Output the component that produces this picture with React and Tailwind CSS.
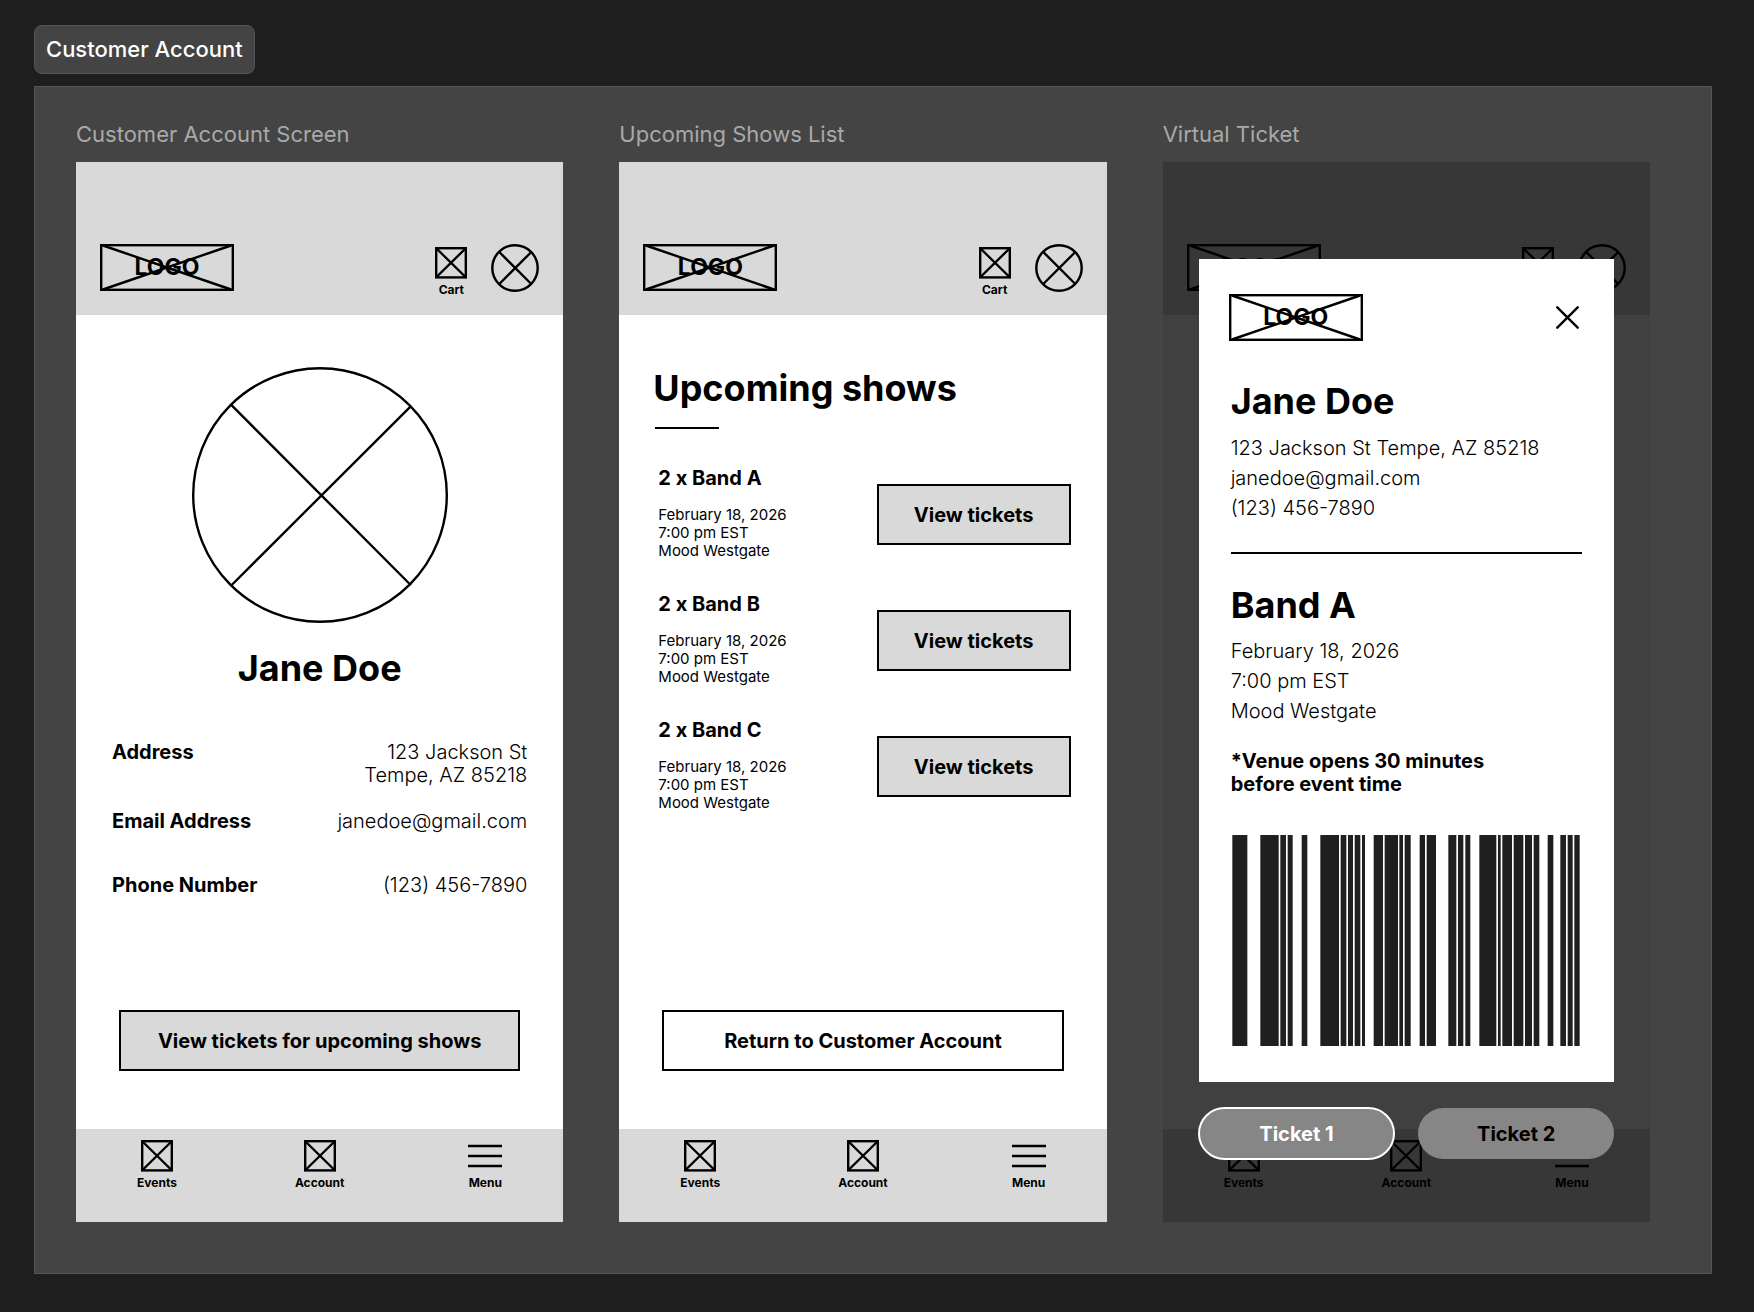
const shows = [
  { id: "a", band: "Band A" },
  { id: "b", band: "Band B" },
  { id: "c", band: "Band C" },
];

// [start, width] of each bar
const bars = [
  [1, 45], [85, 55], [145, 17], [167, 15], [209, 17], [265, 56], [326, 17], [348, 15], [368, 17], [390, 9],
  [425, 28], [458, 40], [502, 11], [518, 18], [563, 16], [584, 28], [649, 24], [678, 16], [700, 15], [742, 51],
  [798, 8], [811, 29], [845, 29], [879, 21], [905, 17], [947, 17], [985, 17], [1007, 15], [1027, 16],
];

function Logo() {
  return (
    <div className="relative flex h-[47px] w-[134px] items-center justify-center">
      <span className="text-[23px] font-bold">LOGO</span>
      <svg className="absolute inset-0" width="134" height="47" fill="none" stroke="black" strokeWidth="2.4" aria-hidden="true">
        <rect x="1.2" y="1.2" width="131.6" height="44.6" />
        <path d="M3 1.5 131 45.5M131 1.5 3 45.5" />
      </svg>
    </div>
  );
}

function BoxIcon() {
  return (
    <svg className="shrink-0" width="32" height="32" fill="none" stroke="black" strokeWidth="2.4" aria-hidden="true">
      <rect x="1.2" y="1.2" width="29.6" height="29.2" />
      <path d="M1.5 1.5 30.5 30M30.5 1.5 1.5 30" />
    </svg>
  );
}

function ScreenHeader() {
  return (
    <header className="flex h-[153px] items-start justify-between bg-[#d9d9d9] px-6 pt-[82px]">
      <Logo />
      <div className="flex items-start gap-6">
        <button type="button" className="flex flex-col items-center gap-[3px] pt-[3px] text-xs leading-4 font-bold">
          <BoxIcon />
          Cart
        </button>
        <button type="button" aria-label="Profile">
          <svg className="block" width="48" height="48" fill="none" stroke="black" strokeWidth="2.4" aria-hidden="true">
            <circle cx="24" cy="24" r="22.7" />
            <path d="M8.3 8 40.3 40M40.3 8 8.3 40" />
          </svg>
        </button>
      </div>
    </header>
  );
}

function ScreenNav() {
  return (
    <nav className="grid h-[93px] grid-cols-3 items-start bg-[#d9d9d9] px-[61px] pt-[11px] text-xs leading-4 font-bold">
      <a href="#events" className="flex flex-col items-center gap-[3px] justify-self-start">
        <BoxIcon />
        Events
      </a>
      <a href="#account" className="flex flex-col items-center gap-[3px] justify-self-center">
        <BoxIcon />
        Account
      </a>
      <a href="#menu" className="flex flex-col items-center gap-[3px] justify-self-end">
        <svg width="34" height="32" stroke="black" strokeWidth="2.4" aria-hidden="true">
          <path d="M0 6h34M0 16h34M0 26h34" />
        </svg>
        Menu
      </a>
    </nav>
  );
}

function Screen({ title, children }) {
  return (
    <section className="flex flex-col">
      <h2 className="mb-3 text-[22px] leading-8 text-[#a9a9a9]">{title}</h2>
      <div className="relative flex grow flex-col bg-white">
        <ScreenHeader />
        {children}
        <ScreenNav />
      </div>
    </section>
  );
}

function Detail({ label, children }) {
  return (
    <div className="flex min-h-[41px] justify-between">
      <dt className="font-bold">{label}</dt>
      <dd className="text-right font-light">{children}</dd>
    </div>
  );
}

function AccountScreen() {
  return (
    <Screen title="Customer Account Screen">
      <main className="flex grow flex-col px-9 pt-[52px] pb-[58px]">
        <svg className="self-center" width="256" height="256" fill="none" stroke="black" strokeWidth="2.4" aria-hidden="true">
          <circle cx="128" cy="128" r="126.8" />
          <path d="M38.7 37.3 218.7 218M218.7 39.3 38.7 219" />
        </svg>
        <h1 className="mt-[23px] text-center text-4xl leading-11 font-bold">Jane Doe</h1>
        <dl className="mt-[51px] mb-[95px] flex flex-col gap-[23px] text-xl leading-[23px]">
          <Detail label="Address">
            123 Jackson St
            <br />
            Tempe, AZ 85218
          </Detail>
          <Detail label="Email Address">janedoe@gmail.com</Detail>
          <Detail label="Phone Number">(123) 456-7890</Detail>
        </dl>
        <button type="button" className="mx-[7px] mt-auto h-[61px] border-2 border-black bg-[#d9d9d9] text-xl font-bold">
          View tickets for upcoming shows
        </button>
      </main>
    </Screen>
  );
}

function ShowsScreen() {
  return (
    <Screen title="Upcoming Shows List">
      <main className="flex grow flex-col px-9 pt-[51px] pb-[58px]">
        <h1 className="-ml-0.5 text-4xl leading-11 font-bold">Upcoming shows</h1>
        <hr className="mt-[17px] w-16 border-t-2 border-black" />
        <ul className="mt-[38px] flex flex-col gap-[33px] pl-[3px]">
          {shows.map((s) => (
            <li key={s.id} className="flex items-start justify-between">
              <div>
                <h3 className="mb-4 text-xl leading-[23px] font-bold">2 x {s.band}</h3>
                <p className="text-[15px] leading-[18px]">
                  February 18, 2026
                  <br />
                  7:00 pm EST
                  <br />
                  Mood Westgate
                </p>
              </div>
              <button type="button" className="mt-[17px] h-[61px] w-[194px] border-2 border-black bg-[#d9d9d9] text-xl font-bold">
                View tickets
              </button>
            </li>
          ))}
        </ul>
        <button type="button" className="mx-[7px] mt-auto h-[61px] border-2 border-black text-xl font-bold">
          Return to Customer Account
        </button>
      </main>
    </Screen>
  );
}

function Barcode() {
  return (
    <svg className="mx-auto mt-[39px] block h-[211px] w-[348px]" viewBox="0 0 1044 633" fill="#1f1f1f" role="img" aria-label="Ticket barcode">
      {bars.map(([x, w]) => (
        <rect key={x} x={x} width={w} height="633" />
      ))}
    </svg>
  );
}

function TicketScreen() {
  return (
    <Screen title="Virtual Ticket">
      <div className="grow" />
      <div className="absolute inset-0 z-10 bg-black/75 px-9 pt-[97px]">
        <article className="bg-white px-8 pt-[35px] pb-9">
          <div className="-ml-0.5 flex items-center justify-between pr-[3px]">
            <Logo />
            <button type="button" aria-label="Close">
              <svg className="block" width="23" height="23" stroke="black" strokeWidth="2.4" strokeLinecap="round" aria-hidden="true">
                <path d="M1.3 1.3 21.7 21.7M21.7 1.3 1.3 21.7" />
              </svg>
            </button>
          </div>
          <h1 className="mt-[38px] text-4xl leading-11 font-bold">Jane Doe</h1>
          <p className="mt-2.5 text-xl leading-[30px] font-light">
            123 Jackson St Tempe, AZ 85218
            <br />
            janedoe@gmail.com
            <br />
            (123) 456-7890
          </p>
          <hr className="mt-[29px] border-t-2 border-black" />
          <h2 className="mt-[29px] text-4xl leading-11 font-bold">Band A</h2>
          <p className="mt-[9px] text-xl leading-[30px] font-light">
            February 18, 2026
            <br />
            7:00 pm EST
            <br />
            Mood Westgate
          </p>
          <p className="mt-6 text-xl leading-[23px] font-bold">
            *Venue opens 30 minutes
            <br />
            before event time
          </p>
          <Barcode />
        </article>
        <div className="mt-[26px] grid grid-cols-2 gap-6 text-xl font-bold">
          <button type="button" className="h-[51px] rounded-full bg-[#868686] text-white outline-2 -outline-offset-1 outline-white">
            Ticket 1
          </button>
          <button type="button" className="h-[51px] rounded-full bg-[#868686]">
            Ticket 2
          </button>
        </div>
      </div>
    </Screen>
  );
}

export default function App() {
  return (
    <div className="min-h-screen bg-[#1e1e1e] pt-[25px] pr-[42px] pb-[38px] pl-[34px] font-['Inter',sans-serif] text-black">
      <div className="mb-3 flex h-[49px] w-fit items-center rounded-lg border border-[#555] bg-[#444] px-[11px] text-[22px] font-medium text-white">
        Customer Account
      </div>
      <div className="grid grid-cols-3 gap-14 border border-[#555] bg-[#444] pt-[31px] pr-[61px] pb-[51px] pl-[41px]">
        <AccountScreen />
        <ShowsScreen />
        <TicketScreen />
      </div>
    </div>
  );
}
